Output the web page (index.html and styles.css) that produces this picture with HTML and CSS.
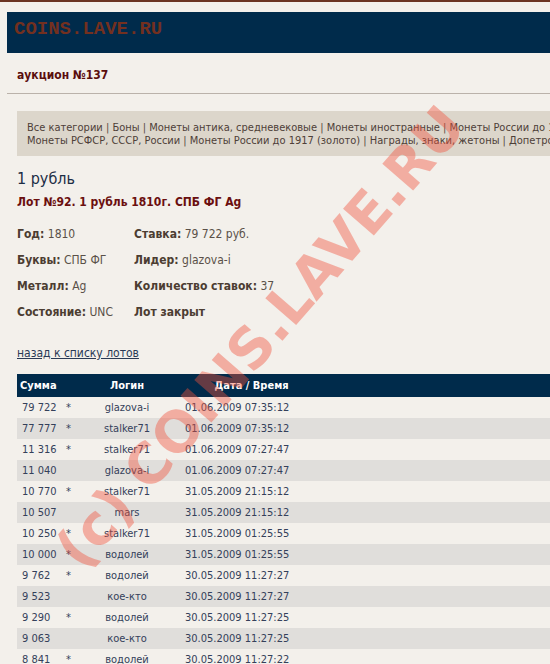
FILE: index.html
```html
<!DOCTYPE html>
<html lang="ru">
<head>
  <meta charset="UTF-8">
  <title>аукцион №137 - Лот №92</title>
  <link rel="stylesheet" href="styles.css">
</head>
<body>
  <div class="topline"></div>
  <div class="header"><span class="logo">COINS.LAVE.RU</span></div>
  <h2 class="auction">аукцион №137</h2>
  <div class="rule"></div>

  <div class="cats">
    <a href="#">Все категории</a> | <a href="#">Боны</a> | <a href="#">Монеты антика, средневековые</a> | <a href="#">Монеты иностранные</a> | <a href="#">Монеты России до 1917 (серебро)</a><br>
    <a href="#">Монеты РСФСР, СССР, России</a> | <a href="#">Монеты России до 1917 (золото)</a> | <a href="#">Награды, знаки, жетоны</a> | <a href="#">Допетровские монеты</a>
  </div>

  <h1 class="cat-title">1 рубль</h1>
  <h3 class="lot-title">Лот №92. 1 рубль 1810г. СПБ ФГ Ag</h3>

  <div class="info">
    <div><b>Год:</b> 1810</div>
    <div><b>Ставка:</b> 79 722 руб.</div>
    <div><b>Буквы:</b> СПБ ФГ</div>
    <div><b>Лидер:</b> glazova-i</div>
    <div><b>Металл:</b> Ag</div>
    <div><b>Количество ставок:</b> 37</div>
    <div><b>Состояние:</b> UNC</div>
    <div><b>Лот закрыт</b></div>
  </div>

  <a class="back" href="#">назад к списку лотов</a>

  <table class="bids">
    <thead>
      <tr><th class="c-sum">Сумма</th><th class="c-star"></th><th class="c-login">Логин</th><th class="c-date">Дата / Время</th><th></th></tr>
    </thead>
    <tbody>
      <tr><td>79 722</td><td>*</td><td class="c-login">glazova-i</td><td>01.06.2009 07:35:12</td><td></td></tr>
      <tr><td>77 777</td><td>*</td><td class="c-login">stalker71</td><td>01.06.2009 07:35:12</td><td></td></tr>
      <tr><td>11 316</td><td>*</td><td class="c-login">stalker71</td><td>01.06.2009 07:27:47</td><td></td></tr>
      <tr><td>11 040</td><td></td><td class="c-login">glazova-i</td><td>01.06.2009 07:27:47</td><td></td></tr>
      <tr><td>10 770</td><td>*</td><td class="c-login">stalker71</td><td>31.05.2009 21:15:12</td><td></td></tr>
      <tr><td>10 507</td><td></td><td class="c-login">mars</td><td>31.05.2009 21:15:12</td><td></td></tr>
      <tr><td>10 250</td><td>*</td><td class="c-login">stalker71</td><td>31.05.2009 01:25:55</td><td></td></tr>
      <tr><td>10 000</td><td>*</td><td class="c-login">водолей</td><td>31.05.2009 01:25:55</td><td></td></tr>
      <tr><td>9 762</td><td>*</td><td class="c-login">водолей</td><td>30.05.2009 11:27:27</td><td></td></tr>
      <tr><td>9 523</td><td></td><td class="c-login">кое-кто</td><td>30.05.2009 11:27:27</td><td></td></tr>
      <tr><td>9 290</td><td>*</td><td class="c-login">водолей</td><td>30.05.2009 11:27:25</td><td></td></tr>
      <tr><td>9 063</td><td></td><td class="c-login">кое-кто</td><td>30.05.2009 11:27:25</td><td></td></tr>
      <tr><td>8 841</td><td>*</td><td class="c-login">водолей</td><td>30.05.2009 11:27:22</td><td></td></tr>
    </tbody>
  </table>

  <div class="watermark">(c) COINS.LAVE.RU</div>
</body>
</html>
```

FILE: styles.css
```css
html, body { margin: 0; padding: 0; overflow: hidden; }
body { background: #f3f0eb; font-family: "DejaVu Sans Condensed", "Liberation Sans", sans-serif; font-size: 11px; color: #4a4038; width: 700px; position: relative; }

.topline { height: 2px; background: #6b3322; }
.header { margin: 10px 0 0 7px; height: 41px; background: #002b4b; }
.logo { display: inline-block; margin: 6px 0 0 7px; font-family: "Liberation Mono", monospace; font-weight: bold; font-size: 19px; color: #73301f; }

.auction { margin: 15px 0 0 17px; font-size: 12px; font-weight: bold; color: #5a0d0d; line-height: 14px; }
.rule { margin: 11px 0 0 7px; height: 1px; background: #bab2aa; }

.cats { margin: 17px 0 0 17px; padding: 10px 10px 9px; background: #dcd6cb; line-height: 13px; white-space: nowrap; color: #5a4d43; }
.cats a { color: #4e4038; text-decoration: none; }

.cat-title { margin: 14px 0 0 17px; font-size: 16px; font-weight: normal; color: #1c2d45; line-height: 18px; }
.lot-title { margin: 7px 0 0 17px; font-size: 12px; font-weight: bold; color: #6b0f0f; line-height: 14px; }

.info { display: grid; grid-template-columns: 117px auto; grid-auto-rows: 26px; margin: 18px 0 0 17px; font-size: 12px; line-height: 14px; color: #5a5048; }
.info b { color: #4c3d32; }

.back { display: block; margin: 15px 0 0 17px; font-size: 12px; color: #2a3a55; line-height: 14px; }

.bids { margin: 14px 0 0 17px; border-collapse: collapse; table-layout: fixed; width: 620px; }
.bids th, .bids td { box-sizing: border-box; padding: 0; white-space: nowrap; }
.bids th { background: #002b4b; color: #fff; font-weight: bold; height: 23px; text-align: left; }
.bids td { height: 21px; color: #34405a; }
.bids tbody tr:nth-child(even) td { background: #e0dedb; }
.bids th:nth-child(1) { width: 44px; padding-left: 3px; }
.bids th:nth-child(2) { width: 22px; }
.bids th:nth-child(3) { width: 90px; }
.bids th:nth-child(4) { width: 157px; text-align: center; }
.bids td:nth-child(1) { padding-left: 5px; }
.bids td:nth-child(2) { padding-left: 5px; }
.bids td:nth-child(4) { padding-left: 12px; }
.bids .c-login { text-align: center; padding-right: 2px; }

.watermark { position: absolute; left: 260px; top: 337px; transform: translate(-50%, -50%) rotate(-49deg); font-family: "DejaVu Sans", sans-serif; font-weight: bold; font-size: 56px; white-space: nowrap; color: rgba(240, 80, 60, 0.42); pointer-events: none; }
```
